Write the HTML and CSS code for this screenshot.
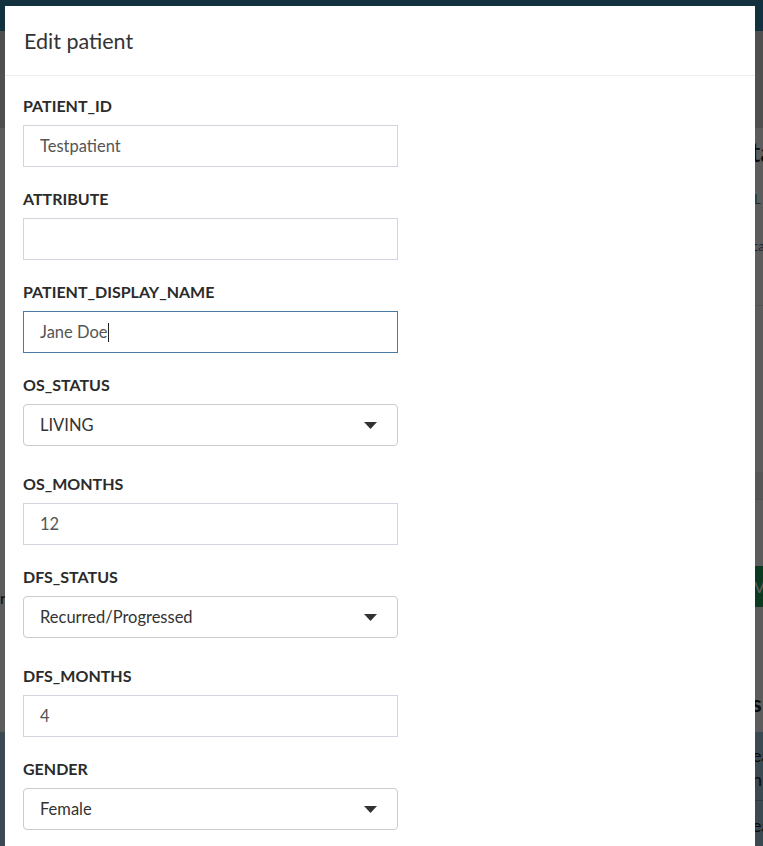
FILE: index.html
```html
<!DOCTYPE html>
<html lang="en">
<head>
<meta charset="utf-8">
<title>Edit patient</title>
<link rel="stylesheet" href="styles.css">
</head>
<body>
<div class="page">
  <div class="topnav"></div>
  <div class="subbar"></div>
  <div class="content">
    <div class="left-col">
      <div class="left-gap"></div>
      <div class="left-frag">r</div>
    </div>
    <div class="right-col">
      <div class="frag-title">ta</div>
      <div class="frag-small green">L</div>
      <div class="frag-small blue">ca</div>
      <div class="frag-rule"></div>
      <div class="frag-band"></div>
      <div class="frag-btn">V</div>
      <div class="frag-head">s</div>
    </div>
  </div>
  <div class="footer">
    <div class="footer-inner">
      <div class="foot-line">ea</div>
      <div class="foot-line">n</div>
      <div class="foot-rule"></div>
      <div class="foot-line">ea</div>
    </div>
  </div>
</div>
<div class="backdrop"></div>
<div class="modal">
  <div class="modal-header">
    <h4 class="modal-title">Edit patient</h4>
  </div>
  <div class="modal-body">
    <div class="group">
      <div class="label">PATIENT_ID</div>
      <div class="field">Testpatient</div>
    </div>
    <div class="group">
      <div class="label">ATTRIBUTE</div>
      <div class="field"></div>
    </div>
    <div class="group">
      <div class="label">PATIENT_DISPLAY_NAME</div>
      <div class="field focused">Jane Doe<span class="caret"></span></div>
    </div>
    <div class="group select-group">
      <div class="label">OS_STATUS</div>
      <div class="field select"><span>LIVING</span><svg class="arrow" width="13" height="7" viewBox="0 0 13 7"><path d="M0 0H13L6.5 7Z" fill="#333"/></svg></div>
    </div>
    <div class="group">
      <div class="label">OS_MONTHS</div>
      <div class="field">12</div>
    </div>
    <div class="group select-group">
      <div class="label">DFS_STATUS</div>
      <div class="field select"><span>Recurred/Progressed</span><svg class="arrow" width="13" height="7" viewBox="0 0 13 7"><path d="M0 0H13L6.5 7Z" fill="#333"/></svg></div>
    </div>
    <div class="group">
      <div class="label">DFS_MONTHS</div>
      <div class="field">4</div>
    </div>
    <div class="group select-group">
      <div class="label">GENDER</div>
      <div class="field select"><span>Female</span><svg class="arrow" width="13" height="7" viewBox="0 0 13 7"><path d="M0 0H13L6.5 7Z" fill="#333"/></svg></div>
    </div>
  </div>
</div>
</body>
</html>
```
FILE: styles.css
```css
html, body {
  margin: 0;
  padding: 0;
  height: 846px;
  overflow: hidden;
}
body {
  font-family: Lato, "Liberation Sans", sans-serif;
  background: #ffffff;
  color: #333;
}
.page {
  width: 763px;
}
.topnav {
  height: 31px;
  background: #3785af;
}
.subbar {
  height: 97px;
  background: #dcdcdc;
}
.content {
  height: 604px;
  display: flex;
  justify-content: space-between;
  background: #fff;
}
.left-col {
  width: 6px;
  white-space: nowrap;
}
.left-gap {
  height: 460px;
}
.left-frag {
  font-size: 16px;
  line-height: 20px;
  color: #222;
}
.right-col {
  width: 11px;
  white-space: nowrap;
}
.frag-title {
  margin-top: 9px;
  margin-left: -1px;
  font-size: 26px;
  line-height: 30px;
  color: #222;
}
.frag-small {
  font-size: 13px;
  line-height: 18px;
  margin-left: 2px;
}
.frag-small.green {
  margin-top: 23px;
  color: #4f8a60;
}
.frag-small.blue {
  margin-top: 29px;
  color: #3d6fb0;
  margin-left: 0;
}
.frag-rule {
  margin-top: 50px;
  height: 1px;
  background: #e6e6e6;
}
.frag-band {
  margin-top: 166px;
  height: 27px;
  background: #efefef;
  border-bottom: 1px solid #e0e0e0;
}
.frag-btn {
  margin-top: 66px;
  height: 41px;
  background: #1f9f5e;
  color: #fff;
  font-size: 16px;
  line-height: 41px;
  padding-left: 2px;
}
.frag-head {
  margin-top: 84px;
  font-size: 22px;
  font-weight: 700;
  line-height: 26px;
  color: #222;
}
.footer {
  height: 114px;
  background: #a4cee4;
  display: flex;
  justify-content: flex-end;
}
.footer-inner {
  width: 11px;
  white-space: nowrap;
  color: #222;
  font-size: 18px;
}
.foot-line {
  line-height: 24px;
}
.foot-line:first-child {
  margin-top: 11px;
}
.foot-rule {
  height: 1px;
  background: #7fa3b6;
  margin: 9px 0 12px;
}
.backdrop {
  position: fixed;
  inset: 0;
  background: rgba(0, 0, 0, 0.64);
}
.modal {
  position: absolute;
  left: 5px;
  top: 6px;
  width: 750px;
  background: #fff;
  height: 900px;
}
.modal-header {
  height: 69px;
  border-bottom: 1px solid #eeeeee;
  display: flex;
  align-items: center;
  padding: 0 19px;
}
.modal-title {
  margin: 0;
  font-size: 21.5px;
  font-weight: 400;
  color: #333;
}
.modal-body {
  padding: 20px 18px 0;
}
.group {
  margin-bottom: 22px;
}
.group.select-group {
  margin-bottom: 28px;
}
.label {
  font-size: 16px;
  font-weight: 700;
  line-height: 20px;
  margin-bottom: 9px;
  color: #2b2b2b;
}
.field {
  box-sizing: border-box;
  width: 375px;
  height: 42px;
  border: 1px solid #d3d5de;
  padding: 0 16px;
  display: flex;
  align-items: center;
  font-size: 16.5px;
  color: #555;
}
.field.focused {
  border-color: #4a7aa3;
}
.caret {
  display: inline-block;
  width: 1px;
  height: 19px;
  background: #222;
}
.field.select {
  border-color: #cccccc;
  border-radius: 4px;
  justify-content: space-between;
  padding-right: 20px;
  color: #333;
}
.arrow {
  display: block;
}
```
